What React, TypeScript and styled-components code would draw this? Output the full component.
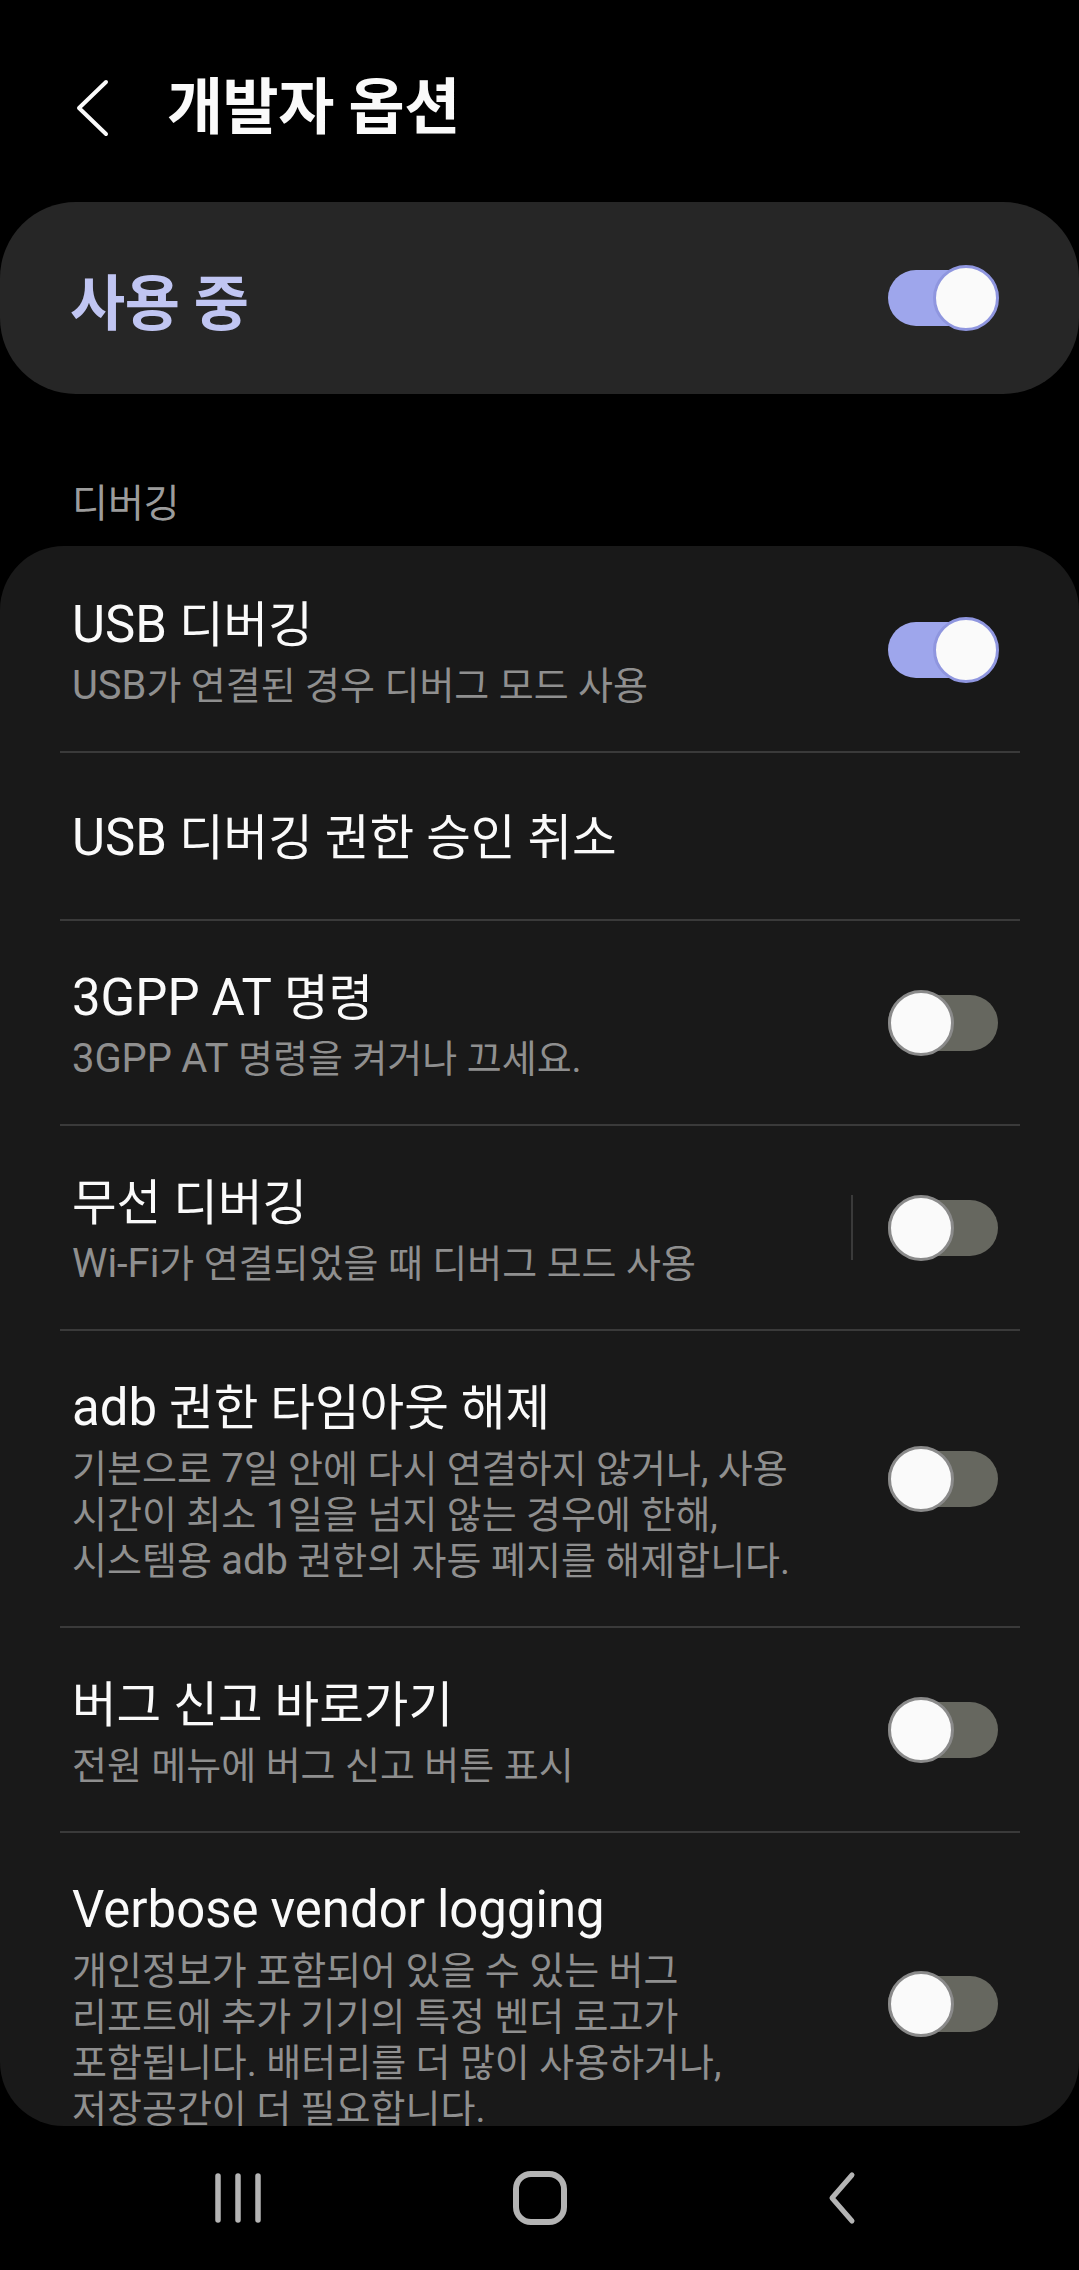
import React from "react";
import styled, { createGlobalStyle } from "styled-components";

const Global = createGlobalStyle`
  html, body { margin: 0; padding: 0; background: #000; }
  body {
    font-family: Roboto, "Noto Sans CJK KR", sans-serif;
    -webkit-font-smoothing: antialiased;
  }
  #root { width: 1079px; }
`;

const Screen = styled.div`
  width: 1079px;
  height: 2270px;
  background: #000;
  display: flex;
  flex-direction: column;
  overflow: hidden;
`;

const Header = styled.header`
  flex: none;
  height: 202px;
  box-sizing: border-box;
  padding-top: 14px;
  display: flex;
  align-items: center;
`;

const BackButton = styled.div`
  flex: none;
  display: flex;
  align-items: center;
  padding-left: 75px;
  width: 36px;
  height: 58px;
`;

const Title = styled.h1`
  margin: 0 0 0 56px;
  font-size: 61px;
  font-weight: 700;
  color: #fafafa;
  line-height: 72px;
  letter-spacing: -0.5px;
`;

const MasterCard = styled.section`
  flex: none;
  height: 192px;
  border-radius: 76px;
  background: #262626;
  display: flex;
  align-items: center;
  justify-content: space-between;
  box-sizing: border-box;
  padding: 0 80px 0 70px;
`;

const MasterLabel = styled.span`
  font-size: 60px;
  font-weight: 700;
  color: #c0c5f2;
  letter-spacing: -0.5px;
`;

const SectionLabel = styled.div`
  flex: none;
  margin: 84px 0 16px;
  padding-left: 72px;
  font-size: 39px;
  line-height: 52px;
  color: #9c9c9c;
`;

const ListCard = styled.section`
  flex: none;
  height: 1580px;
  box-sizing: border-box;
  padding-top: 2px;
  overflow: hidden;
  border-radius: 64px;
  background: #191919;
  display: flex;
  flex-direction: column;
`;

const Row = styled.div`
  flex: none;
  display: flex;
  align-items: center;
  min-height: 166px;
  box-sizing: border-box;
  padding: 0 80px 0 72px;
`;

const TextBlock = styled.div`
  flex: 1;
  min-width: 0;
  padding: 47px 0 42px;
`;

const RowTitle = styled.div`
  font-size: 48.5px;
  line-height: 62px;
  color: #fafafa;
  white-space: nowrap;
`;

const RowSub = styled.div`
  margin-top: 6px;
  font-size: 38px;
  line-height: 46px;
  color: #8f8f8f;
`;

const SubLine = styled.div`
  white-space: nowrap;
`;

const Latin = styled.span`
  font-size: 1.05em;
  line-height: 1;
`;

const Divider = styled.div`
  flex: none;
  height: 2px;
  margin: 0 59px 0 60px;
  background: #3a3a3a;
`;

const VSep = styled.div`
  flex: none;
  width: 2px;
  height: 65px;
  margin-right: 35px;
  background: #3a3a3a;
`;

const Switch = styled.div`
  position: relative;
  flex: none;
  width: 111px;
  height: 66px;
`;

const Track = styled.div<{ $on: boolean }>`
  position: absolute;
  left: 0;
  right: 1px;
  top: 5px;
  height: 56px;
  border-radius: 28px;
  background: ${(p) => (p.$on ? "#9ea6ec" : "#66675f")};
`;

const Thumb = styled.div<{ $on: boolean }>`
  position: absolute;
  top: 0;
  ${(p) => (p.$on ? "right: 0;" : "left: 0;")}
  width: 66px;
  height: 66px;
  box-sizing: border-box;
  border-radius: 50%;
  background: #fafafa;
  border: 3px solid ${(p) => (p.$on ? "#8f96df" : "#8a8a8a")};
`;

const NavBar = styled.nav`
  flex: 1;
  display: flex;
  justify-content: center;
  align-items: center;
`;

const NavSlot = styled.div`
  width: 302px;
  display: flex;
  justify-content: center;
  align-items: center;
`;

const mixed = (s: string) =>
  s.split(/([A-Za-z0-9]+)/).map((part, i) =>
    /^[A-Za-z0-9]+$/.test(part) ? <Latin key={i}>{part}</Latin> : <React.Fragment key={i}>{part}</React.Fragment>
  );

const Toggle = ({ on }: { on: boolean }) => (
  <Switch>
    <Track $on={on} />
    <Thumb $on={on} />
  </Switch>
);

type Item = {
  title: string;
  sub?: string[];
  toggle?: boolean;
  sep?: boolean;
};

const items: Item[] = [
  { title: "USB 디버깅", sub: ["USB가 연결된 경우 디버그 모드 사용"], toggle: true },
  { title: "USB 디버깅 권한 승인 취소" },
  { title: "3GPP AT 명령", sub: ["3GPP AT 명령을 켜거나 끄세요."], toggle: false },
  { title: "무선 디버깅", sub: ["Wi-Fi가 연결되었을 때 디버그 모드 사용"], toggle: false, sep: true },
  {
    title: "adb 권한 타임아웃 해제",
    sub: [
      "기본으로 7일 안에 다시 연결하지 않거나, 사용",
      "시간이 최소 1일을 넘지 않는 경우에 한해,",
      "시스템용 adb 권한의 자동 폐지를 해제합니다.",
    ],
    toggle: false,
  },
  { title: "버그 신고 바로가기", sub: ["전원 메뉴에 버그 신고 버튼 표시"], toggle: false },
  {
    title: "Verbose vendor logging",
    sub: [
      "개인정보가 포함되어 있을 수 있는 버그",
      "리포트에 추가 기기의 특정 벤더 로고가",
      "포함됩니다. 배터리를 더 많이 사용하거나,",
      "저장공간이 더 필요합니다.",
    ],
    toggle: false,
  },
];

export default function App() {
  return (
    <>
      <Global />
      <Screen>
        <Header>
          <BackButton>
            <svg width="36" height="58" viewBox="0 0 36 58">
              <path d="M31 3 L4 29 L31 55" fill="none" stroke="#fafafa" strokeWidth="4" strokeLinecap="round" strokeLinejoin="round" />
            </svg>
          </BackButton>
          <Title>개발자 옵션</Title>
        </Header>

        <MasterCard>
          <MasterLabel>사용 중</MasterLabel>
          <Toggle on={true} />
        </MasterCard>

        <SectionLabel>디버깅</SectionLabel>

        <ListCard>
          {items.map((it, i) => (
            <React.Fragment key={it.title}>
              {i > 0 && <Divider />}
              <Row>
                <TextBlock>
                  <RowTitle>{mixed(it.title)}</RowTitle>
                  {it.sub && (
                    <RowSub>
                      {it.sub.map((l) => (
                        <SubLine key={l}>{mixed(l)}</SubLine>
                      ))}
                    </RowSub>
                  )}
                </TextBlock>
                {it.sep && <VSep />}
                {it.toggle !== undefined && <Toggle on={it.toggle} />}
              </Row>
            </React.Fragment>
          ))}
        </ListCard>

        <NavBar>
          <NavSlot>
            <svg width="46" height="52" viewBox="0 0 46 52">
              <g stroke="#b4b4b4" strokeWidth="5.5" strokeLinecap="round">
                <line x1="3" y1="4" x2="3" y2="48" />
                <line x1="23" y1="4" x2="23" y2="48" />
                <line x1="43" y1="4" x2="43" y2="48" />
              </g>
            </svg>
          </NavSlot>
          <NavSlot>
            <svg width="54" height="54" viewBox="0 0 54 54">
              <rect x="3" y="3" width="48" height="48" rx="15" fill="none" stroke="#b4b4b4" strokeWidth="6" />
            </svg>
          </NavSlot>
          <NavSlot>
            <svg width="32" height="54" viewBox="0 0 32 54">
              <path d="M26 4 L6 27 L26 50" fill="none" stroke="#b4b4b4" strokeWidth="5" strokeLinecap="round" strokeLinejoin="round" />
            </svg>
          </NavSlot>
        </NavBar>
      </Screen>
    </>
  );
}
